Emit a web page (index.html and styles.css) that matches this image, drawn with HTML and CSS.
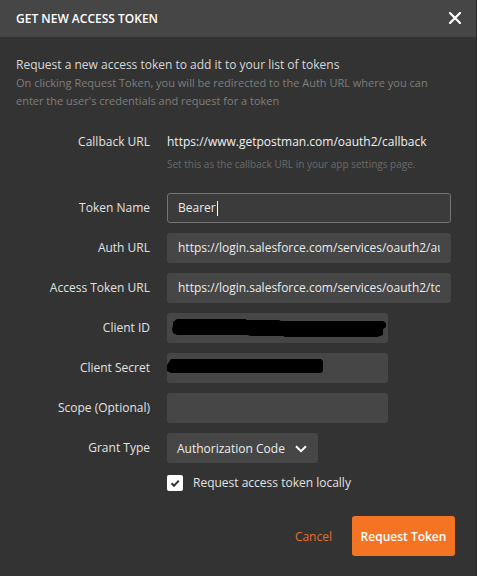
FILE: index.html
```html
<!DOCTYPE html>
<html>
<head>
<meta charset="utf-8">
<link rel="stylesheet" href="styles.css">
</head>
<body>
<div class="modal">
  <header class="head">
    <h1 class="title">GET NEW ACCESS TOKEN</h1>
    <button class="close" aria-label="Close">
      <svg width="12" height="12" viewBox="0 0 12 12"><path d="M1 1 L11 11 M11 1 L1 11" stroke="#fff" stroke-width="2.2" stroke-linecap="square"/></svg>
    </button>
  </header>
  <div class="body">
    <p class="lead">Request a new access token to add it to your list of tokens</p>
    <p class="sub">On clicking Request Token, you will be redirected to the Auth URL where you can enter the user's credentials and request for a token</p>

    <div class="form">
      <div class="row row-callback">
        <div class="label">Callback URL</div>
        <div class="cb">
          <div class="cb-url">https://www.getpostman.com/oauth2/callback</div>
          <div class="cb-hint">Set this as the callback URL in your app settings page.</div>
        </div>
      </div>
      <div class="row">
        <div class="label">Token Name</div>
        <div class="input input-focus wide">Bearer<span class="caret"></span></div>
      </div>
      <div class="row">
        <div class="label">Auth URL</div>
        <div class="input wide"><span class="val">https://login.salesforce.com/services/oauth2/authorize</span></div>
      </div>
      <div class="row">
        <div class="label">Access Token URL</div>
        <div class="input wide"><span class="val">https://login.salesforce.com/services/oauth2/token</span></div>
      </div>
      <div class="row">
        <div class="label">Client ID</div>
        <div class="input narrow redact">
          <svg class="blob" width="221" height="30" viewBox="0 0 221 30"><path d="M6 9 L10 6 L78 6 L80 7 L112 7 L114 8 L216 8 L219 10 L219 14 L216 16 L216 22 L210 24 L118 24 L116 23 L84 23 L80 22 L10 22 L6 20 L5 16 L6 13 Z" fill="#000"/></svg>
        </div>
      </div>
      <div class="row">
        <div class="label">Client Secret</div>
        <div class="input narrow redact">
          <svg class="blob" width="221" height="30" viewBox="0 0 221 30"><path d="M2 9 L4 6 L154 6 L156 8 L156 18 L154 20 L4 20 L0 18 L0 12 Z" fill="#000"/></svg>
        </div>
      </div>
      <div class="row">
        <div class="label">Scope (Optional)</div>
        <div class="input narrow"></div>
      </div>
      <div class="row">
        <div class="label">Grant Type</div>
        <div class="select">Authorization Code
          <svg class="chev" width="12" height="8" viewBox="0 0 12 8"><path d="M1 1.2 L6 6.2 L11 1.2" fill="none" stroke="#fff" stroke-width="2"/></svg>
        </div>
      </div>
      <div class="row row-check">
        <div class="label"></div>
        <label class="check">
          <span class="box"><svg width="16" height="16" viewBox="0 0 16 16"><path d="M4.5 8.2 L7 10.7 L11.8 5.6" fill="none" stroke="#333" stroke-width="2"/></svg></span>
          <span class="check-text">Request access token locally</span>
        </label>
      </div>
    </div>

    <div class="actions">
      <button class="btn-cancel">Cancel</button>
      <button class="btn-primary">Request Token</button>
    </div>
  </div>
</div>
</body>
</html>
```

FILE: styles.css
```css
* { box-sizing: border-box; }
html, body { margin: 0; padding: 0; }
body {
  background: #333333;
  font-family: "Open Sans", "DejaVu Sans", sans-serif;
  width: 477px;
  height: 576px;
  overflow: hidden;
}
.modal {
  width: 477px;
  height: 576px;
  background: #333333;
  border-right: 1px solid #2a2a2a;
  display: flex;
  flex-direction: column;
}
.head {
  height: 37px;
  background: #464646;
  display: flex;
  align-items: center;
  justify-content: space-between;
  padding: 0 15px 0 16px;
}
.title {
  margin: 0;
  font-size: 12px;
  font-weight: 600;
  color: #ffffff;
}
.close {
  background: none;
  border: 0;
  padding: 0;
  width: 12px;
  height: 12px;
  display: flex;
  margin-top: -1px;
}
.body {
  padding: 19px 21px 0 16px;
  display: flex;
  flex-direction: column;
}
.lead {
  margin: 0;
  font-size: 12px;
  line-height: 18px;
  color: #d8d8d8;
}
.sub {
  margin: 0;
  font-size: 11px;
  line-height: 18px;
  color: #7e7e7e;
}
.form {
  margin-top: 23px;
  display: flex;
  flex-direction: column;
  gap: 10px;
}
.row {
  display: grid;
  grid-template-columns: 134px 1fr;
  column-gap: 17px;
  align-items: center;
}
.row-callback { align-items: start; margin-bottom: 12px; }
.label {
  text-align: right;
  font-size: 12px;
  color: #e2e2e2;
  line-height: 18px;
  white-space: nowrap;
}
.cb-url {
  font-size: 12px;
  line-height: 18px;
  color: #f0f0f0;
}
.cb-hint {
  margin-top: 6px;
  font-size: 10px;
  line-height: 14px;
  color: #6a6a6a;
}
.input {
  height: 30px;
  background: #464646;
  border-radius: 3px;
  padding: 0 11px;
  font-size: 12px;
  line-height: 30px;
  color: #ececec;
  white-space: nowrap;
}
.val {
  display: block;
  overflow: hidden;
  white-space: nowrap;
}
.wide { width: 284px; }
.narrow { width: 221px; }
.input-focus {
  background: #3b3b3b;
  border: 1px solid #747474;
  padding: 0 10px;
  line-height: 28px;
  display: flex;
  align-items: center;
}
.caret {
  display: inline-block;
  width: 1px;
  height: 15px;
  background: #ffffff;
  margin-left: 1px;
}
.redact { padding: 0; }
.blob { display: block; }
.select {
  width: 151px;
  height: 30px;
  background: #464646;
  border-radius: 3px;
  padding: 0 11px 0 10px;
  font-size: 12px;
  color: #ececec;
  display: flex;
  align-items: center;
  justify-content: space-between;
  white-space: nowrap;
}
.chev { display: block; margin-top: 1px; }
.row-check { margin-top: 1px; }
.check {
  display: flex;
  align-items: center;
  gap: 10px;
}
.box {
  width: 16px;
  height: 16px;
  background: #ffffff;
  border-radius: 2px;
  display: flex;
}
.check-text {
  font-size: 12px;
  color: #e2e2e2;
  line-height: 18px;
}
.actions {
  margin-top: 24px;
  display: flex;
  justify-content: flex-end;
  align-items: center;
  gap: 10px;
}
.btn-cancel {
  background: none;
  border: 0;
  font-family: inherit;
  font-size: 12px;
  color: #e3702b;
  padding: 0 10px;
  height: 40px;
}
.btn-primary {
  background: #f57424;
  border: 0;
  border-radius: 3px;
  height: 40px;
  width: 103px;
  font-family: inherit;
  font-size: 12px;
  font-weight: 600;
  color: #ffffff;
  padding: 0;
  text-align: center;
  white-space: nowrap;
}
```
